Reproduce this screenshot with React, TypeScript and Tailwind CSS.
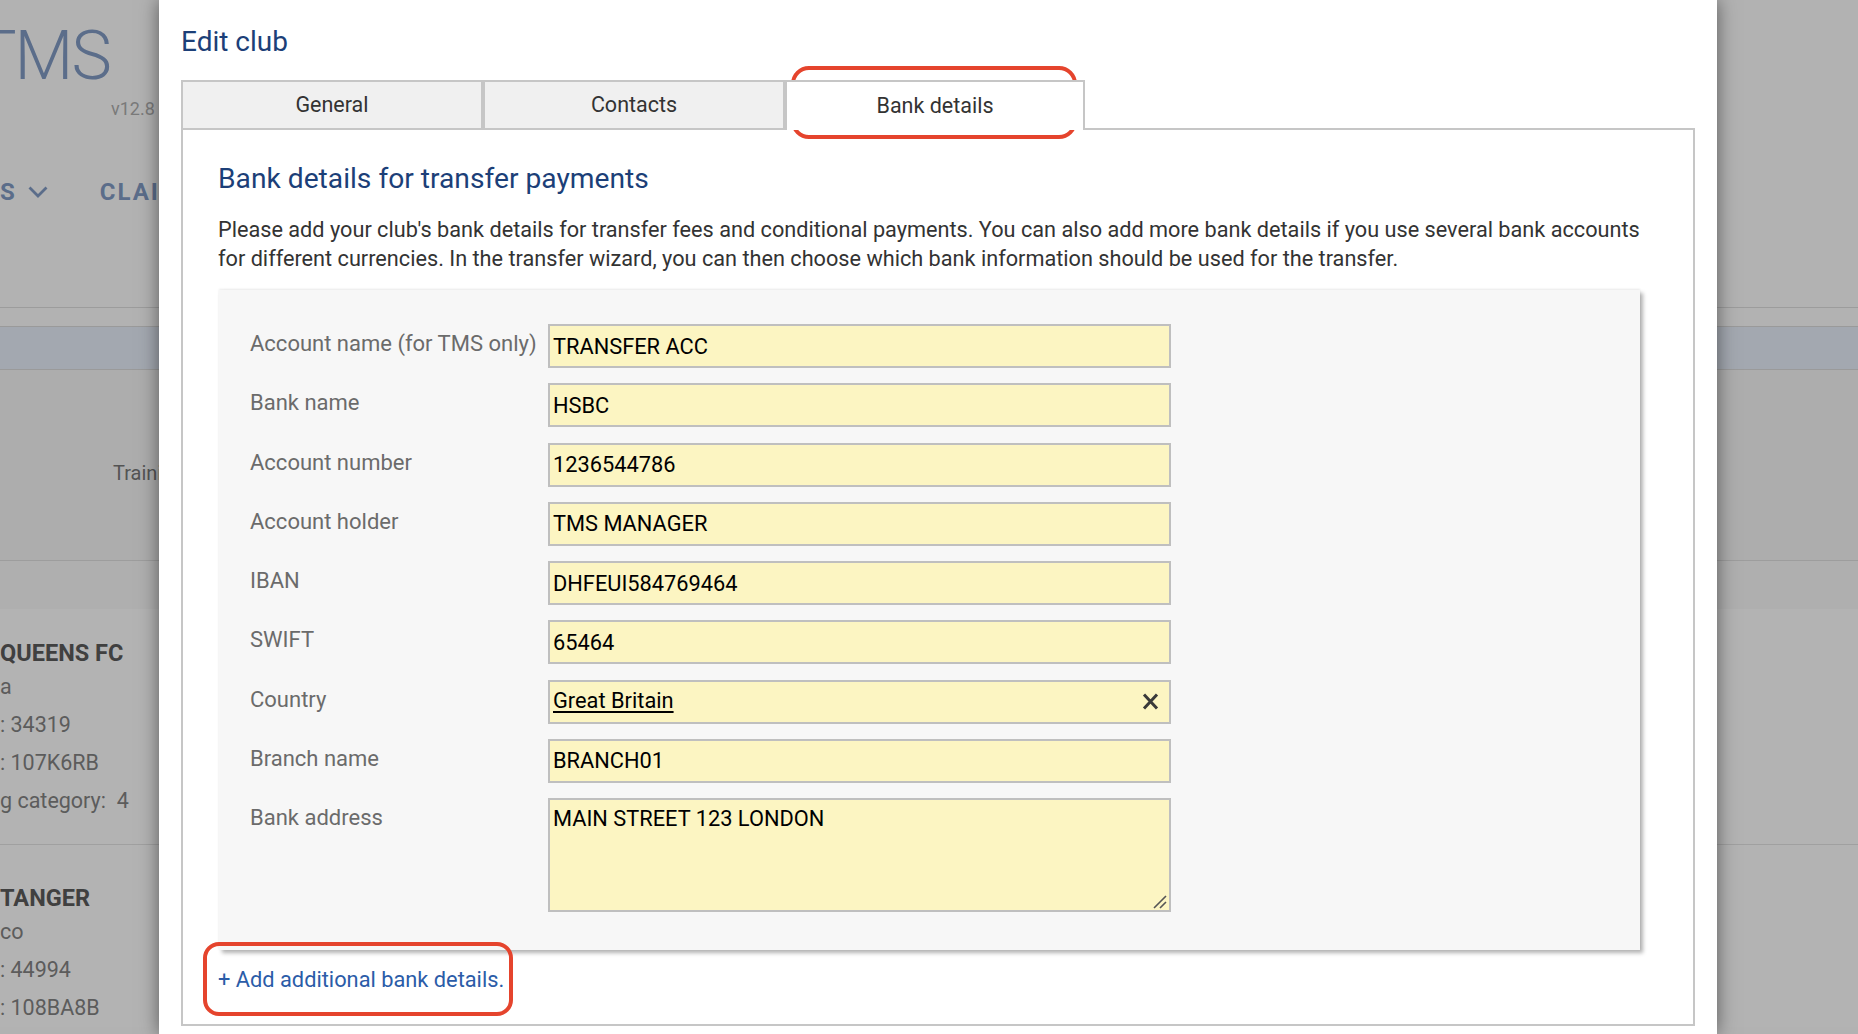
const bankFields = [
  { label: 'Account name (for TMS only)', value: 'TRANSFER ACC' },
  { label: 'Bank name', value: 'HSBC' },
  { label: 'Account number', value: '1236544786' },
  { label: 'Account holder', value: 'TMS MANAGER' },
  { label: 'IBAN', value: 'DHFEUI584769464' },
  { label: 'SWIFT', value: '65464' },
]

function FieldRow({ label, children }: { label: string; children: React.ReactNode }) {
  return (
    <div className="flex items-start">
      <div className="w-[298px] shrink-0 text-[22px] leading-[40px] text-[#6b6b6b]">{label}</div>
      {children}
    </div>
  )
}

function TextField({ value }: { value: string }) {
  return (
    <input
      readOnly
      defaultValue={value}
      className="w-[623px] h-[44px] border-2 border-[#bfbfbf] bg-[#fcf5c2] px-[3px] text-[21.8px] text-black outline-none"
    />
  )
}

// Page sitting behind the modal, already dimmed by the backdrop
function BackgroundPage() {
  return (
    <div className="flex flex-col w-full h-full bg-[#b2b2b2]">
      <div className="mt-[22px] -ml-[24px] text-[68px] leading-[68px] font-light tracking-[-2px] text-[#5b6d8a]">
        TMS
      </div>
      <div className="mt-[10px] pl-[111px] text-[18px] leading-[18px] text-[#7a7a7a]">v12.8</div>
      <div className="mt-[59px] flex items-center h-[30px] text-[24px] font-bold tracking-[2px] text-[#5b6d8a]">
        <span>S</span>
        <svg width="20" height="12" viewBox="0 0 20 12" className="ml-[11px]" fill="none">
          <polyline points="1.5,1.5 10,10 18.5,1.5" stroke="#5b6d8a" strokeWidth="2.8" />
        </svg>
        <span className="ml-[52px]">CLAIMS</span>
      </div>
      <div className="mt-[100px] h-px bg-[#9c9c9c]" />
      <div className="mt-[18px] h-[44px] border-y border-[#9a9a9a] bg-[#a3a8b0]" />
      <div className="h-[190px] bg-[#adadad] pt-[88px] pl-[113px] text-[20px] leading-[30px] text-[#545454]">
        Training
      </div>
      <div className="h-[49px] border-t border-[#9d9d9d] bg-[#afafaf]" />
      <div className="flex flex-col bg-[#b3b3b3] pt-[28px] text-[21.5px] text-[#5c5c5c]">
        <div className="h-[33px] leading-[33px] text-[23.5px] font-bold text-[#404040]">QUEENS FC</div>
        <div className="h-[33px] leading-[33px]">a</div>
        <div className="mt-[3px] leading-[38px]">: 34319</div>
        <div className="leading-[38px]">: 107K6RB</div>
        <div className="leading-[38px] whitespace-pre">g category:  4</div>
        <div className="mt-[24px] h-px bg-[#a0a0a0]" />
        <div className="mt-[37px] h-[33px] leading-[33px] text-[23.5px] font-bold text-[#404040]">TANGER</div>
        <div className="h-[33px] leading-[33px]">co</div>
        <div className="mt-[3px] leading-[38px]">: 44994</div>
        <div className="leading-[38px]">: 108BA8B</div>
      </div>
    </div>
  )
}

function Tab({ label, active, className = '' }: { label: string; active?: boolean; className?: string }) {
  return (
    <div
      className={
        active
          ? `h-[50px] flex items-center justify-center border-2 border-b-0 border-[#c6c6c6] bg-white text-[21.5px] text-[#333] ${className}`
          : `h-[50px] flex items-center justify-center border-2 border-[#c6c6c6] bg-[#f0f0f0] text-[21.5px] text-[#333] ${className}`
      }
    >
      {label}
    </div>
  )
}

function EditClubDialog() {
  return (
    <div className="ml-[159px] w-[1558px] h-full bg-white shadow-[0_0_18px_rgba(0,0,0,0.5)] pt-[28px] px-[22px]">
      <h1 className="text-[28px] leading-[28px] text-[#1c3f78]">Edit club</h1>

      {/* Tabs */}
      <div className="relative z-10 mt-[24px] -mb-[2px] flex items-end">
        <Tab label="General" className="w-[302px]" />
        <Tab label="Contacts" className="w-[302px]" />
        <Tab label="Bank details" active className="w-[300px]" />
      </div>

      {/* Tab panel */}
      <div className="border-2 border-[#c6c6c6] pt-[32px] pl-[35px] pr-[35px] pb-[29px]">
        <h2 className="text-[28.2px] leading-[34px] text-[#1c3f78]">Bank details for transfer payments</h2>
        <p className="mt-[19px] text-[21.7px] leading-[29px] text-[#333]">
          Please add your club's bank details for transfer fees and conditional payments. You can also add more bank
          details if you use several bank accounts for different currencies. In the transfer wizard, you can then
          choose which bank information should be used for the transfer.
        </p>

        <div className="mt-[17px] ml-[1px] mr-[18px] bg-[#f7f7f7] shadow-[0_-1px_2px_rgba(0,0,0,0.08),3px_3px_4px_rgba(0,0,0,0.3)] pt-[34px] pb-[38px] pl-[31px] flex flex-col gap-[15.25px]">
          {bankFields.map((f) => (
            <FieldRow key={f.label} label={f.label}>
              <TextField value={f.value} />
            </FieldRow>
          ))}
          <FieldRow label="Country">
            <div className="w-[623px] h-[44px] border-2 border-[#bfbfbf] bg-[#fcf5c2] pl-[3px] pr-[9px] flex items-center justify-between text-[21.8px] text-black">
              <span className="underline underline-offset-[3px]">Great Britain</span>
              <svg width="19" height="19" viewBox="0 0 19 19" fill="none">
                <path d="M3 2.5 L16 16.5 M16 2.5 L3 16.5" stroke="#3a3a3a" strokeWidth="3" />
              </svg>
            </div>
          </FieldRow>
          <FieldRow label="Branch name">
            <TextField value="BRANCH01" />
          </FieldRow>
          <FieldRow label="Bank address">
            <div className="relative">
              <textarea
                readOnly
                defaultValue="MAIN STREET 123 LONDON"
                className="block resize-none w-[623px] h-[114px] border-2 border-[#bfbfbf] bg-[#fcf5c2] px-[3px] pt-[4px] text-[21.8px] leading-[30px] text-black outline-none"
              />
              {/* resize grip */}
              <svg width="14" height="14" viewBox="0 0 14 14" className="absolute right-[4px] bottom-[3px]" fill="none">
                <path d="M1 13 L13 1 M7 13 L13 7" stroke="#555" strokeWidth="1.6" />
              </svg>
            </div>
          </FieldRow>
        </div>

        <div className="mt-[15px] text-[21.8px] leading-[30px] text-[#2b5ca8]">+ Add additional bank details.</div>
      </div>
    </div>
  )
}

export default function App() {
  return (
    <div className="relative w-[1858px] h-[1034px] overflow-hidden bg-[#b2b2b2] font-['Roboto',sans-serif]">
      <BackgroundPage />

      {/* Modal layer */}
      <div className="absolute inset-0 flex">
        <EditClubDialog />
      </div>

      {/* Highlight marks */}
      <div className="absolute left-[791px] top-[66px] w-[286px] h-[73px] border-4 border-[#e5442d] rounded-[18px]" />
      <div className="absolute left-[203px] top-[942px] w-[310px] h-[74px] border-4 border-[#e5442d] rounded-[16px]" />
    </div>
  )
}
